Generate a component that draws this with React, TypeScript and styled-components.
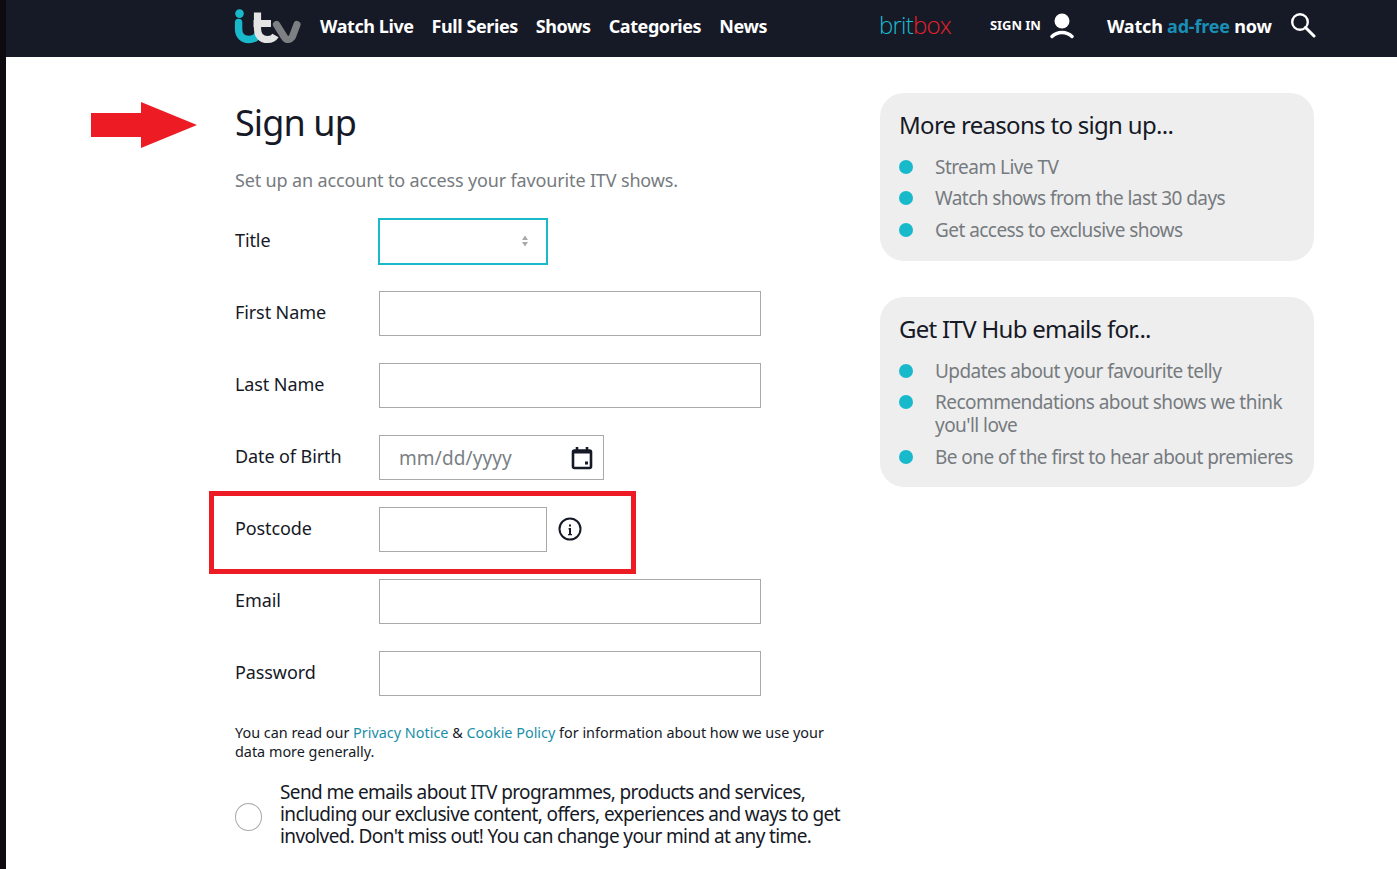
import React from "react";
import styled, { createGlobalStyle } from "styled-components";

const Global = createGlobalStyle`
  html, body { margin: 0; padding: 0; background: #fff; }
  body { font-family: "Noto Sans", "Open Sans", Arial, sans-serif; color: #161926; overflow: hidden; }
  * { box-sizing: border-box; }
`;

const Page = styled.div`
  position: relative;
  display: flex;
  width: 1397px;
  height: 869px;
  overflow: hidden;
`;
const EdgeStrip = styled.div`
  width: 6px;
  flex: none;
  background: #0d0a10;
`;
const Shell = styled.div`
  flex: 1;
  display: flex;
  flex-direction: column;
  min-width: 0;
`;
const TopBar = styled.header`
  height: 57px;
  flex: none;
  background: #161926;
  display: flex;
  align-items: center;
  padding-left: 228px;
  color: #fff;
`;
const Logo = styled.svg`
  width: 67px;
  height: 35px;
  flex: none;
  margin-right: 19px;
  margin-top: -4px;
`;
const NavList = styled.nav`
  display: flex;
  gap: 18px;
  margin-top: -5px;
`;
const NavLink = styled.a`
  font-size: 18px;
  font-weight: 700;
  letter-spacing: -0.42px;
  color: #fff;
  white-space: nowrap;
`;
const BarRight = styled.div`
  margin-left: auto;
  display: flex;
  align-items: center;
  margin-right: 82px;
  margin-top: -5px;
`;
const BritBox = styled.span`
  font-family: "Open Sans", sans-serif;
  font-weight: 300;
  font-size: 24px;
  letter-spacing: -0.8px;
  width: 111px;
  color: #1cbcd2;
  white-space: nowrap;
  margin-top: -3px;
`;
const BritRed = styled.span`
  color: #e5222a;
`;
const SignIn = styled.span`
  font-size: 13px;
  font-weight: 700;
  letter-spacing: -0.05px;
  width: 60px;
  white-space: nowrap;
  margin-top: -2px;
`;
const UserIcon = styled.svg`
  width: 24px;
  height: 26px;
  flex: none;
  margin-right: 33px;
`;
const Watch = styled.span`
  font-size: 18px;
  font-weight: 700;
  letter-spacing: -0.2px;
  white-space: nowrap;
  width: 184px;
`;
const AdFree = styled.span`
  color: #1a8fb5;
`;
const SearchIcon = styled.svg`
  width: 26px;
  height: 26px;
  flex: none;
  margin: -2px -1px 0 -1px;
`;

const Content = styled.main`
  display: flex;
  flex: 1;
  padding-left: 229px;
`;
const FormColumn = styled.section`
  width: 645px;
  flex: none;
`;
const Heading = styled.h1`
  margin: 41px 0 0;
  font-size: 36px;
  font-weight: 400;
  line-height: 50px;
  letter-spacing: -0.9px;
  color: #161926;
`;
const Lead = styled.p`
  margin: 19px 0 25px;
  font-size: 18px;
  line-height: 26px;
  letter-spacing: -0.15px;
  color: #767b80;
`;
const FormStack = styled.div`
  display: flex;
  flex-direction: column;
`;
const Row = styled.div`
  display: flex;
  align-items: flex-start;
  height: 72px;
  padding-top: 1px;
`;
const Label = styled.label`
  width: 144px;
  flex: none;
  font-size: 18px;
  line-height: 26px;
  letter-spacing: -0.1px;
  padding-top: 8px;
  color: #161926;
`;
const Field = styled.input<{ $w: number }>`
  width: ${(p) => p.$w}px;
  height: 45px;
  border: 1px solid #a9a9a9;
  background: #fff;
  border-radius: 0;
  outline: none;
  padding: 0 19px;
  font: inherit;
`;
const SelectBox = styled.div`
  width: 170px;
  height: 47px;
  margin: -1px 0 0 -1px;
  border: 2px solid #19b9cc;
  display: flex;
  align-items: center;
  justify-content: flex-end;
  padding-right: 17px;
  background: #fff;
`;
const Sort = styled.svg`
  width: 8px;
  height: 12px;
  margin-top: -1px;
`;
const DateBox = styled.div`
  width: 225px;
  height: 45px;
  border: 1px solid #a9a9a9;
  display: flex;
  align-items: center;
  justify-content: space-between;
  padding: 0 10px 0 19px;
`;
const DateText = styled.span`
  font-size: 19px;
  letter-spacing: 0.1px;
  color: #7a7f85;
`;
const CalendarIcon = styled.svg`
  width: 22px;
  height: 24px;
  flex: none;
`;
const InfoIcon = styled.svg`
  width: 24px;
  height: 24px;
  margin: 10px 0 0 11px;
  flex: none;
`;
const Notice = styled.p`
  margin: 1px 0 0;
  font-size: 14.4px;
  line-height: 19px;
  color: #161926;
  width: 610px;
`;
const NoticeLink = styled.a`
  color: #1a8fa8;
`;
const Consent = styled.div`
  display: flex;
  align-items: center;
  margin-top: 20px;
`;
const Radio = styled.span`
  width: 27px;
  height: 28px;
  flex: none;
  border: 1px solid #a9a9a9;
  border-radius: 50%;
  margin: 6px 18px 0 0;
`;
const ConsentText = styled.p`
  margin: 0;
  font-size: 19px;
  line-height: 22px;
  letter-spacing: -0.62px;
  width: 570px;
  color: #161926;
`;
const Aside = styled.aside`
  width: 434px;
  margin: 36px 0 0 0;
  display: flex;
  flex-direction: column;
  gap: 36px;
`;
const Card = styled.div`
  background: #eeeeee;
  border-radius: 24px;
  padding: 15px 10px 19px 19px;
`;
const CardTitle = styled.h2`
  margin: 0 0 14px;
  font-size: 24px;
  font-weight: 400;
  line-height: 34px;
  letter-spacing: -0.7px;
  color: #161926;
`;
const Bullets = styled.ul`
  margin: 0;
  padding: 0;
  list-style: none;
  display: flex;
  flex-direction: column;
  gap: 8.7px;
`;
const Bullet = styled.li`
  position: relative;
  padding-left: 36px;
  font-size: 19px;
  line-height: 22.8px;
  letter-spacing: -0.55px;
  color: #767b80;
  &::before {
    content: "";
    position: absolute;
    left: 0;
    top: 4px;
    width: 14px;
    height: 14px;
    border-radius: 50%;
    background: #19b9cc;
  }
`;
const RedBox = styled.div`
  position: absolute;
  left: 209px;
  top: 491px;
  width: 427px;
  height: 83px;
  border: 5px solid #ed1c24;
  pointer-events: none;
`;
const Arrow = styled.svg`
  position: absolute;
  left: 91px;
  top: 102px;
  width: 106px;
  height: 46px;
`;

const rows1 = ["Stream Live TV", "Watch shows from the last 30 days", "Get access to exclusive shows"];
const rows2 = [
  "Updates about your favourite telly",
  "Recommendations about shows we think you'll love",
  "Be one of the first to hear about premieres",
];

export default function App() {
  return (
    <Page>
      <Global />
      <EdgeStrip />
      <Shell>
        <TopBar>
          <Logo viewBox="0 0 67 35">
            <circle cx="5.5" cy="4.6" r="4.3" fill="#19b9cc" />
            <path d="M4.6 13.5V20c0 7 4.5 10.5 10 10.5 5 0 8-2 9.500-5.500" fill="none" stroke="#19b9cc" strokeWidth="7.4" strokeLinecap="round" />
            <path d="M23.500 3.500V20c0 6.500 4 10.500 10 10.500 3.500 0 6.500-1.500 8-4M19.500 14.500H37" fill="none" stroke="#e4e4e4" strokeWidth="7.2" />
            <path d="M42.500 15.500L50 27.500c1.500 2.500 3 3 4.200 3 1.300 0 2.800-.5 4.300-3L63 15.500" fill="none" stroke="#7d8083" strokeWidth="7.2" strokeLinecap="round" />
          </Logo>
          <NavList>
            <NavLink>Watch Live</NavLink>
            <NavLink>Full Series</NavLink>
            <NavLink>Shows</NavLink>
            <NavLink>Categories</NavLink>
            <NavLink>News</NavLink>
          </NavList>
          <BarRight>
            <BritBox>brit<BritRed>box</BritRed></BritBox>
            <SignIn>SIGN IN</SignIn>
            <UserIcon viewBox="0 0 24 26">
              <circle cx="12" cy="8" r="7.5" fill="#fff" />
              <path d="M2 23.500C5 20.500 8.500 19.500 12 19.500s7 1 10 4" fill="none" stroke="#fff" strokeWidth="3.4" strokeLinecap="round" />
            </UserIcon>
            <Watch>Watch <AdFree>ad-free</AdFree> now</Watch>
            <SearchIcon viewBox="0 0 26 26">
              <circle cx="10" cy="10" r="7.8" fill="none" stroke="#fff" strokeWidth="2.4" />
              <path d="M15.500 15.500L24 24" stroke="#fff" strokeWidth="3" strokeLinecap="round" />
            </SearchIcon>
          </BarRight>
        </TopBar>
        <Content>
          <FormColumn>
            <Heading>Sign up</Heading>
            <Lead>Set up an account to access your favourite ITV shows.</Lead>
            <FormStack>
              <Row>
                <Label>Title</Label>
                <SelectBox>
                  <Sort viewBox="0 0 8 12">
                    <path d="M4 0.500L7 5H1ZM4 11.500L1 7H7Z" fill="#a9a9a9" />
                  </Sort>
                </SelectBox>
              </Row>
              <Row>
                <Label>First Name</Label>
                <Field $w={382} />
              </Row>
              <Row>
                <Label>Last Name</Label>
                <Field $w={382} />
              </Row>
              <Row>
                <Label>Date of Birth</Label>
                <DateBox>
                  <DateText>mm/dd/yyyy</DateText>
                  <CalendarIcon viewBox="0 0 22 24">
                    <path d="M6 1V5M16 1V5" stroke="#161926" strokeWidth="2.6" />
                    <rect x="2" y="4.500" width="18" height="17.500" rx="1.5" fill="none" stroke="#161926" strokeWidth="2.6" />
                    <rect x="2" y="4.500" width="18" height="3" fill="#161926" />
                    <rect x="14" y="15.500" width="3" height="3" fill="#161926" />
                  </CalendarIcon>
                </DateBox>
              </Row>
              <Row>
                <Label>Postcode</Label>
                <Field $w={168} />
                <InfoIcon viewBox="0 0 24 24">
                  <circle cx="12" cy="12" r="10.500" fill="none" stroke="#161926" strokeWidth="2" />
                  <path d="M11 11h2v6h1v1.200h-4V17h1v-4.800h-1zM11 7.500h2v2h-2z" fill="#161926" />
                </InfoIcon>
              </Row>
              <Row>
                <Label>Email</Label>
                <Field $w={382} />
              </Row>
              <Row>
                <Label>Password</Label>
                <Field $w={382} />
              </Row>
            </FormStack>
            <Notice>
              You can read our <NoticeLink>Privacy Notice</NoticeLink> &amp; <NoticeLink>Cookie Policy</NoticeLink> for information about how we use your data more generally.
            </Notice>
            <Consent>
              <Radio />
              <ConsentText>
                Send me emails about ITV programmes, products and services, including our exclusive content, offers, experiences and ways to get involved. Don't miss out! You can change your mind at any time.
              </ConsentText>
            </Consent>
          </FormColumn>
          <Aside>
            <Card>
              <CardTitle>More reasons to sign up...</CardTitle>
              <Bullets>
                {rows1.map((t) => <Bullet key={t}>{t}</Bullet>)}
              </Bullets>
            </Card>
            <Card>
              <CardTitle>Get ITV Hub emails for...</CardTitle>
              <Bullets>
                {rows2.map((t) => <Bullet key={t}>{t}</Bullet>)}
              </Bullets>
            </Card>
          </Aside>
        </Content>
      </Shell>
      <RedBox />
      <Arrow viewBox="0 0 106 46">
        <path d="M0 11H50V0L106 23L50 46V35H0Z" fill="#ed1c24" />
      </Arrow>
    </Page>
  );
}
